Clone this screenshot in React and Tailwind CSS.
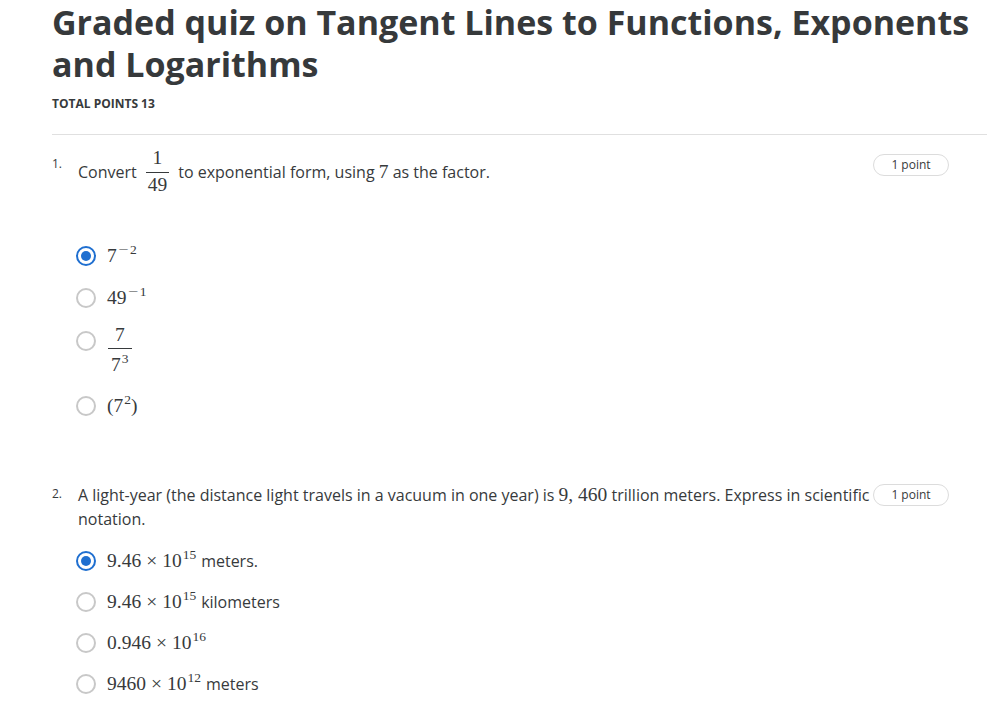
import React from "react";

const serif = "font-['Liberation_Serif','DejaVu_Serif',serif]";

function Radio({ checked }) {
  return checked ? (
    <span className="flex h-[20px] w-[20px] shrink-0 items-center justify-center rounded-full border-2 border-[#1f6fd0]">
      <span className="h-[10px] w-[10px] rounded-full bg-[#1f6fd0]" />
    </span>
  ) : (
    <span className="block h-[20px] w-[20px] shrink-0 rounded-full border-2 border-[#c8c8c8]" />
  );
}

function Badge({ className = "" }) {
  return (
    <div
      className={`flex h-[22px] w-[76px] shrink-0 items-center justify-center rounded-full border border-[#dcdcdc] text-[12px] leading-none text-[#373a3c] ${className}`}
    >
      1 point
    </div>
  );
}

function M({ children }) {
  return <span className={`${serif} text-[19.5px]`}>{children}</span>;
}

function Sup({ children }) {
  return <span className={`${serif} relative -top-[8px] ml-[1px] text-[13.5px] leading-none`}>{children}</span>;
}

function Minus() {
  return <span className="font-['DejaVu_Sans',sans-serif] pr-[1px] font-light">−</span>;
}

function Times() {
  return <span className="mx-[5px]">×</span>;
}

function Option({ checked, children, className = "" }) {
  return (
    <div className={`flex h-[28px] items-center gap-[11px] ${className}`}>
      <Radio checked={checked} />
      <div className="flex items-baseline whitespace-nowrap text-[16px] text-[#373a3c]">{children}</div>
    </div>
  );
}

export default function App() {
  return (
    <div className="min-h-[710px] w-[1004px] bg-white font-['Open_Sans',sans-serif] text-[#373a3c]">
      <div className="pl-[52px] pr-[17px]">
        <h1 className="pt-[1px] text-[34px] font-bold leading-[42px] text-[#36393b]">
          Graded quiz on Tangent Lines to Functions, Exponents and Logarithms
        </h1>
        <div className="mt-[11px] text-[12px] font-bold leading-[16px]">TOTAL POINTS 13</div>
        <div className="mt-[22px] border-t border-[#e0e0e0]" />

        {/* Question 1 */}
        <div className="mt-[13px] flex items-start pr-[38px]">
          <div className="mt-[8px] w-[26px] shrink-0 text-[12px] leading-[16px]">1.</div>
          <div className="flex flex-1 items-center text-[16px] leading-[24px]">
            <span>Convert</span>
            <span className={`${serif} mx-[9px] inline-flex flex-col items-center text-[19.5px]`}>
              <span className="px-[2px] leading-[20px]">1</span>
              <span className="mt-[4px] h-[1px] w-full bg-[#373a3c]" />
              <span className="mt-[2px] px-[2px] leading-[20px]">49</span>
            </span>
            <span>
              to exponential form, using <M>7</M> as the factor.
            </span>
          </div>
          <Badge className="mt-[6px]" />
        </div>

        <div className="ml-[24px] mt-[47px] flex flex-col">
          <Option checked>
            <M>7</M>
            <Sup>
              <Minus />2
            </Sup>
          </Option>
          <Option className="mt-[14px]">
            <M>49</M>
            <Sup>
              <Minus />1
            </Sup>
          </Option>
          <div className="mt-[12px] flex items-start gap-[11px]">
            <div className="mt-[7px] flex">
              <Radio />
            </div>
            <div className={`${serif} ml-[1px] flex flex-col items-center text-[19.5px] text-[#373a3c]`}>
              <span className="px-[3px] leading-[22px]">7</span>
              <span className="mt-[2px] h-[1px] w-full bg-[#373a3c]" />
              <span className="mt-[5px] whitespace-nowrap px-[3px] leading-[22px]">
                7<Sup>3</Sup>
              </span>
            </div>
          </div>
          <Option className="mt-[16px]">
            <M>(7</M>
            <Sup>2</Sup>
            <M>)</M>
          </Option>
        </div>

        {/* Question 2 */}
        <div className="mt-[63px] flex items-start pr-[38px]">
          <div className="mt-[3px] w-[26px] shrink-0 text-[12px] leading-[16px]">2.</div>
          <div className="flex-1 pr-[3px] text-[16px] leading-[24px]">
            A light-year (the distance light travels in a vacuum in one year) is <M>9, 460</M> trillion meters. Express
            in scientific notation.
          </div>
          <Badge className="mt-[1px]" />
        </div>

        <div className="ml-[24px] mt-[16px] flex flex-col gap-[13px]">
          <Option checked>
            <M>
              9.46
              <Times />
              10
            </M>
            <Sup>15</Sup>
            <span className="ml-[5px]">meters.</span>
          </Option>
          <Option>
            <M>
              9.46
              <Times />
              10
            </M>
            <Sup>15</Sup>
            <span className="ml-[5px]">kilometers</span>
          </Option>
          <Option>
            <M>
              0.946
              <Times />
              10
            </M>
            <Sup>16</Sup>
          </Option>
          <Option>
            <M>
              9460
              <Times />
              10
            </M>
            <Sup>12</Sup>
            <span className="ml-[5px]">meters</span>
          </Option>
        </div>
      </div>
    </div>
  );
}
